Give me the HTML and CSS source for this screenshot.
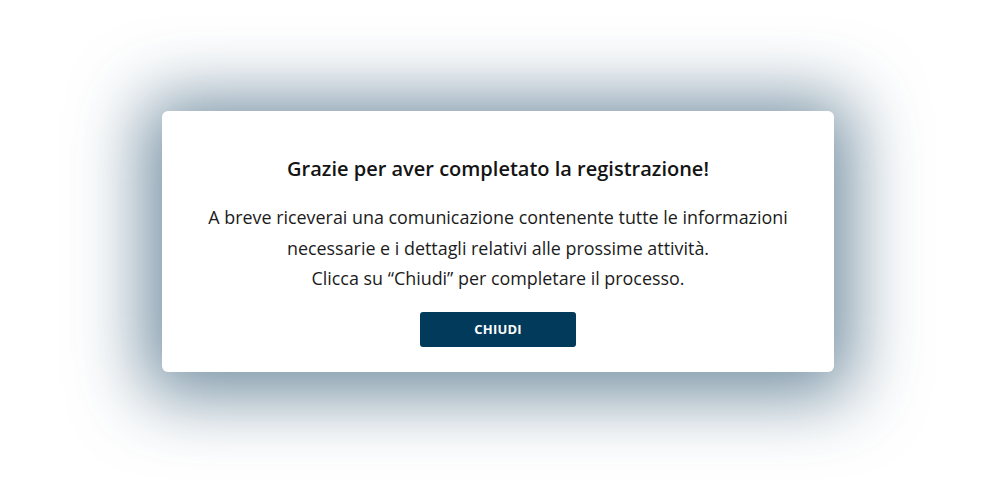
FILE: index.html
```html
<!DOCTYPE html>
<html lang="it">
<head>
<meta charset="utf-8">
<title>Registrazione completata</title>
<link rel="stylesheet" href="styles.css">
</head>
<body>
<div class="stage">
  <div class="modal">
    <h2 class="modal-title">Grazie per aver completato la registrazione!</h2>
    <p class="modal-text">A breve riceverai una comunicazione contenente tutte le informazioni<br>necessarie e i dettagli relativi alle prossime attività.<br>Clicca su “Chiudi” per completare il processo.</p>
    <button class="modal-btn" type="button">CHIUDI</button>
  </div>
</div>
</body>
</html>
```
FILE: styles.css
```css
html, body {
  margin: 0;
  padding: 0;
  background: #ffffff;
}
body {
  font-family: "Open Sans", "Liberation Sans", sans-serif;
  color: #1b1b1b;
}
.stage {
  width: 1004px;
  height: 498px;
  display: flex;
  justify-content: flex-start;
  padding: 111px 0 0 162px;
  box-sizing: border-box;
  overflow: hidden;
}
.modal {
  width: 672px;
  height: 261px;
  box-sizing: border-box;
  background: #ffffff;
  border-radius: 6px;
  box-shadow: 0 6px 70px 18px rgba(30, 75, 105, 0.62);
  padding: 44px 10px 0;
  display: flex;
  flex-direction: column;
  align-items: center;
  text-align: center;
}
.modal-title {
  margin: 0;
  font-size: 20px;
  font-weight: 600;
  line-height: 27px;
  color: #141414;
}
.modal-text {
  margin: 20px 0 0;
  font-size: 17.9px;
  line-height: 30.5px;
  color: #1b1b1b;
}
.modal-btn {
  margin-top: 18px;
  width: 156px;
  height: 35px;
  border: none;
  border-radius: 3px;
  background: #023a5c;
  color: #ffffff;
  font-family: "Open Sans", "Liberation Sans", sans-serif;
  font-size: 13px;
  font-weight: 700;
  letter-spacing: 0.2px;
  cursor: pointer;
}
```
